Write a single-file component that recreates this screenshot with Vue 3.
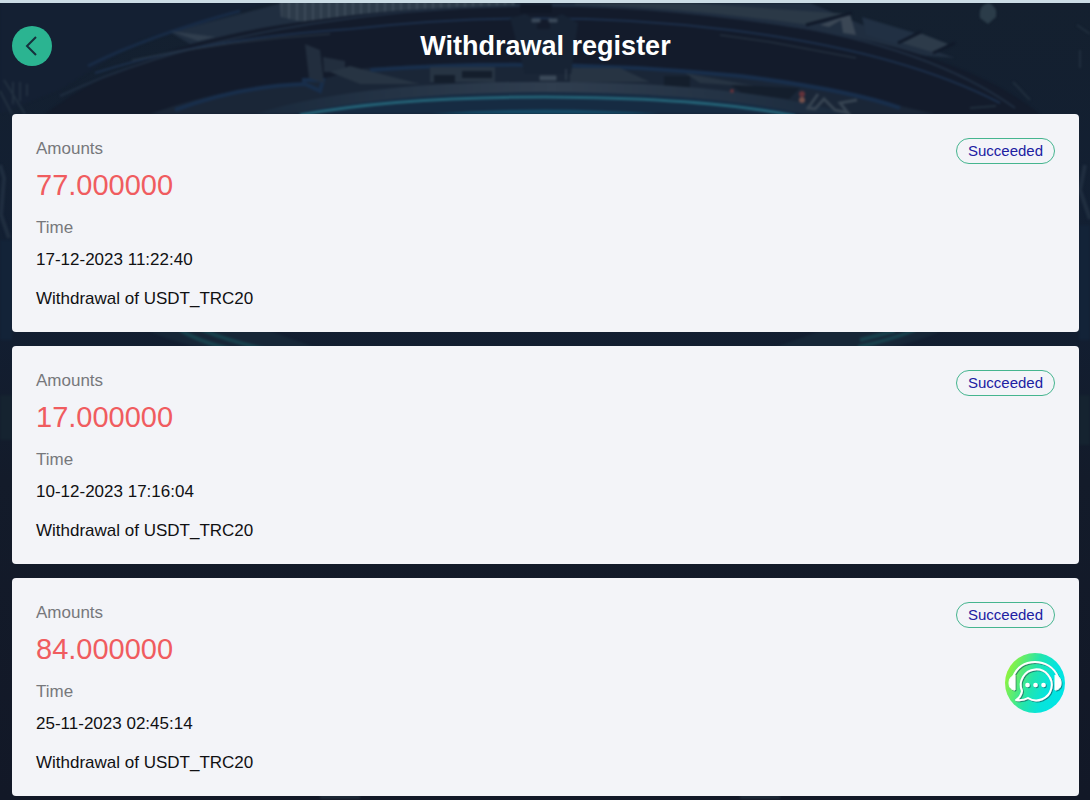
<script setup>
const records = [
  { id: 1, amount: '77.000000', time: '17-12-2023 11:22:40', note: 'Withdrawal of USDT_TRC20', status: 'Succeeded' },
  { id: 2, amount: '17.000000', time: '10-12-2023 17:16:04', note: 'Withdrawal of USDT_TRC20', status: 'Succeeded' },
  { id: 3, amount: '84.000000', time: '25-11-2023 02:45:14', note: 'Withdrawal of USDT_TRC20', status: 'Succeeded' }
]
</script>

<template>
  <div class="page">
    <svg class="backdrop" viewBox="0 0 1090 800" preserveAspectRatio="xMidYMin slice" aria-hidden="true">
      <defs>
        <linearGradient id="base" x1="0" y1="0" x2="0" y2="1">
          <stop offset="0" stop-color="#14202f" />
          <stop offset="0.35" stop-color="#121f33" />
          <stop offset="0.6" stop-color="#131b2a" />
          <stop offset="1" stop-color="#121827" />
        </linearGradient>
        <linearGradient id="steel" x1="0" y1="0" x2="1" y2="0">
          <stop offset="0" stop-color="#1a2a3d" />
          <stop offset="0.5" stop-color="#303e4f" />
          <stop offset="1" stop-color="#1a2a3d" />
        </linearGradient>
        <pattern id="ribs" width="8" height="20" patternUnits="userSpaceOnUse">
          <rect width="8" height="20" fill="#2d3b4a" />
          <rect width="2" height="20" fill="#3d4a59" />
        </pattern>
        <filter id="soft" x="-5%" y="-5%" width="110%" height="110%" color-interpolation-filters="sRGB">
          <feGaussianBlur stdDeviation="1.1" />
        </filter>
      </defs>
      <rect width="1090" height="800" fill="url(#base)" />
      <g filter="url(#soft)" fill="none">
        <path d="M0 0H280L140 40L60 90L0 114Z" fill="#142033" />
        <path d="M240 14L282 3H810L875 30L955 58L900 54Q545 -32 190 44L170 32Z" fill="#202e40" />
        <path d="M280 0H515V6Q390 7 303 22L281 17Z" fill="url(#ribs)" />
        <path d="M575 3H690L850 14L810 25Q690 8 575 5Z" fill="#2b3947" />
        <path d="M820 25L850 14L856 35L843 33L841 20L829 27Z" fill="#3b4755" />
        <path d="M862 17L915 33L896 44L866 35Z" fill="#213043" />
        <path d="M920 33L948 44L935 53L902 43Z" fill="#2d3b4a" />
        <path d="M898 43L921 32M933 53L955 43M806 25L852 13" stroke="#101929" stroke-width="3" />
        <path d="M45 114Q135 45 300 22Q545 -12 790 27Q960 50 1040 114Z" fill="#131b2b" />
        <path d="M60 96Q160 48 310 24Q545 -12 775 23Q930 47 1015 108" stroke="#1f2d40" stroke-width="2" />
        <path d="M88 66Q150 35 240 11" stroke="#182b46" stroke-width="3" />
        <path d="M95 73Q200 39 350 29Q545 7 730 30Q900 51 1000 103" stroke="#1c2f4a" stroke-width="2" />
        <path d="M132 60Q230 40 330 34M720 35L770 42L856 58" stroke="#2c3a48" stroke-width="1" />
        <path d="M170 31L198 41L216 37Z" fill="#303e4e" />
        <path d="M150 114Q220 88 310 82L365 68Q545 56 740 76L850 94L935 114Z" fill="#1a2637" />
        <path d="M175 110Q240 86 305 84L320 91L323 80L302 80M370 70Q545 57 740 76Q850 90 900 108" stroke="#182e4b" stroke-width="4" />
        <path d="M305 44L320 50L324 83L309 78ZM323 57L345 61V72L324 72Z" fill="#222e3e" />
        <path d="M350 66L420 84L360 84L330 72ZM430 67H495V82H430ZM570 68H620L650 82H570ZM685 73L760 87L700 83Z" fill="#273443" />
        <path d="M434 75H455V83H434ZM462 71H492V78H462ZM664 76H690V91H664ZM731 85L800 88L789 99L742 93Z" fill="#141e2c" />
        <path d="M510 18L525 14L537 20V29H550V19L562 14L578 23L571 74H525Z" fill="#172334" />
        <path d="M532 19H540V22H532ZM549 19H557V22H549ZM540 76H556V80H540ZM566 69V80" fill="#3a4858" stroke="#3a4858" />
        <path d="M520 4H552V13H520Z" fill="#101827" />
        <path d="M255 114Q360 81 545 82Q730 81 850 114Z" fill="url(#steel)" />
        <path d="M292 114Q390 93 545 92Q710 93 805 114Z" fill="#162b42" />
        <path d="M300 115Q395 97 545 97Q710 98 795 116" stroke="#246276" stroke-width="3" />
        <path d="M430 114Q545 105 660 114Z" fill="#144965" />
        <path d="M818 94L808 108L815 109L824 99L835 110L848 113L840 103L857 100" stroke="#364351" stroke-width="3" />
        <circle cx="802" cy="94" r="3" fill="#63323a" />
        <circle cx="802" cy="100" r="3" fill="#75504b" />
        <circle cx="732" cy="91" r="2" fill="#63323a" />
        <path d="M980 18Q978 5 989 3Q998 7 996 17L988 24Z" fill="#2b3c49" />
        <path d="M1013 82L1030 100M970 108L996 106M1077 25L1090 34M1080 50V68" stroke="#202e3d" stroke-width="2" />
        <path d="M0 91L12 114M4 80L25 114M13 82V104M20 82V101M27 84V96" stroke="#223040" stroke-width="2" />
        <path d="M0 165L4 178L1 215L9 238M1085 165L1080 190L1090 219" stroke="#202e40" stroke-width="4" />
        <path d="M0 240H12V340H0ZM1079 225H1090V340H1079Z" fill="#132338" />
        <path d="M135 324Q180 350 260 356L340 356L250 324ZM955 324Q910 350 830 356L750 356L840 324Z" fill="#162637" />
        <path d="M180 330Q205 345 245 352M200 329Q225 340 268 350M915 330Q890 340 858 347M895 331L860 340" stroke="#17404c" stroke-width="4" />
        <path d="M0 395H12V440H0ZM1079 395H1090V445H1079Z" fill="#152330" />
        <path d="M320 797H360M740 797H780" stroke="#202c3b" stroke-width="3" />
      </g>
      <rect width="1090" height="3" fill="#cbdce5" />
    </svg>

    <header class="header">
      <button class="back" type="button" aria-label="Back">
        <svg viewBox="0 0 40 40" aria-hidden="true">
          <path d="M24 11L15 20L24 29" fill="none" stroke="#15303c" stroke-width="2" />
        </svg>
      </button>
      <h1>Withdrawal register</h1>
    </header>

    <main class="records">
      <article v-for="record in records" :key="record.id" class="card">
        <div class="details">
          <p class="label">Amounts</p>
          <p class="amount">{{ record.amount }}</p>
          <p class="label">Time</p>
          <p class="time">{{ record.time }}</p>
          <p class="note">{{ record.note }}</p>
        </div>
        <span class="status">{{ record.status }}</span>
      </article>
    </main>

    <button class="support" type="button" aria-label="Customer support">
      <svg viewBox="0 0 60 60" aria-hidden="true">
        <defs>
          <linearGradient id="support-fill" x1="0" y1="0.2" x2="1" y2="0.55">
            <stop offset="0" stop-color="#a1f52c" />
            <stop offset="0.48" stop-color="#23e5ac" />
            <stop offset="0.75" stop-color="#06e4dc" />
            <stop offset="1" stop-color="#00e5e5" />
          </linearGradient>
          <filter id="glyph-shadow" x="-10%" y="-10%" width="130%" height="130%">
            <feDropShadow dx="1" dy="1" stdDeviation="0.6" flood-color="#14545b" flood-opacity="0.65" />
          </filter>
        </defs>
        <circle cx="30" cy="30" r="30" fill="url(#support-fill)" />
        <g filter="url(#glyph-shadow)" fill="none" stroke="#fff" stroke-width="2" stroke-linejoin="round">
          <path d="M8 24C12 14 20 9 30 9S49 14 53 24" />
          <path d="M10 22V37C6 37 4 34 4 30S6 23 10 22ZM50 22V37C54 37 56 34 56 30S54 23 50 22Z" fill="#fff" stroke-width="1" />
          <path d="M17 38A15.5 15.5 0 1 1 23 45Q18 48 11 47Q16 44 17 38Z" />
          <g fill="#fff" stroke="none">
            <circle cx="22.5" cy="32" r="2.3" />
            <circle cx="30.5" cy="32" r="2.3" />
            <circle cx="38.5" cy="32" r="2.3" />
          </g>
        </g>
      </svg>
    </button>
  </div>
</template>

<style>
body {
  background: #121827;
}
</style>

<style scoped>
.page {
  position: relative;
  box-sizing: border-box;
  min-height: 100vh;
  padding: 3px 11px 4px 12px;
  font-family: "Liberation Sans", Arial, sans-serif;
  font-size: 17px;
  line-height: 20px;
  color: #101012;
  isolation: isolate;
}

.backdrop {
  position: absolute;
  inset: 0;
  z-index: -1;
  width: 100%;
  height: 100%;
}

.header {
  display: grid;
  grid-template-columns: 40px 1fr 40px;
  align-items: center;
  height: 86px;
  margin-bottom: 25px;
}

.back,
.support {
  padding: 0;
  border: 0;
  border-radius: 50%;
  cursor: pointer;
}

.back {
  width: 40px;
  height: 40px;
  background: #2bb491;
}

.back svg,
.support svg {
  display: block;
  width: 100%;
  height: 100%;
}

h1 {
  margin: 0;
  font-size: 27px;
  line-height: 32px;
  text-align: center;
  color: #fff;
}

.records {
  display: flex;
  flex-direction: column;
  gap: 14px;
}

.card {
  display: flex;
  align-items: flex-start;
  justify-content: space-between;
  padding: 24px 24px 23px;
  border-radius: 4px;
  background: #f3f4f8;
}

.details {
  padding-top: 1px;
}

.details p {
  margin: 0;
}

.details .label {
  color: #77787c;
}

.details .amount {
  margin: 8px 0 15px;
  font-size: 29px;
  line-height: 36px;
  color: #f05c5f;
}

.details .time {
  margin: 12px 0 19px;
}

.status {
  padding: 0 11px;
  border: 1px solid #45b58f;
  border-radius: 13px;
  font-size: 15px;
  line-height: 24px;
  color: #2020a2;
}

.support {
  position: fixed;
  right: 25px;
  bottom: 87px;
  width: 60px;
  height: 60px;
  background: transparent;
}
</style>
